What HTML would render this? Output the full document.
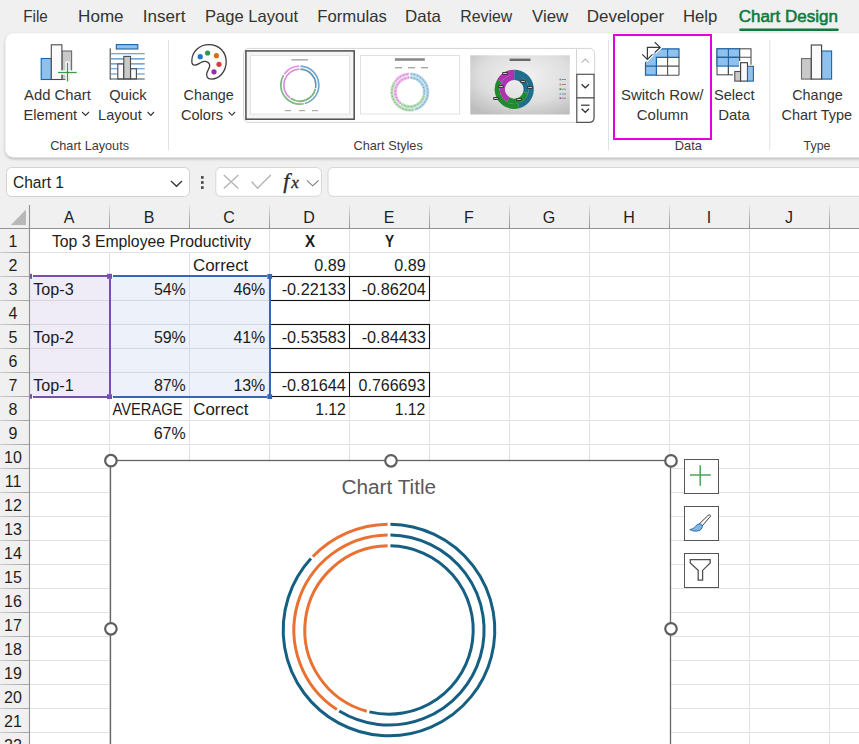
<!DOCTYPE html>
<html><head><meta charset="utf-8"><style>
html,body{margin:0;padding:0;width:859px;height:744px;overflow:hidden;background:#f0f0f0;}
svg{display:block;}
</style></head><body>
<svg width="859" height="744" viewBox="0 0 859 744">
<rect x="0" y="0" width="859" height="744" fill="#f0f0f0" stroke="none" stroke-width="1" rx="0" />
<text x="23.3" y="21.9" font-family="Liberation Sans" font-size="16.5" fill="#333333" font-weight="normal" textLength="24.5" lengthAdjust="spacingAndGlyphs" >File</text>
<text x="78.1" y="21.9" font-family="Liberation Sans" font-size="16.5" fill="#333333" font-weight="normal" textLength="45.5" lengthAdjust="spacingAndGlyphs" >Home</text>
<text x="142.8" y="21.9" font-family="Liberation Sans" font-size="16.5" fill="#333333" font-weight="normal" textLength="42.6" lengthAdjust="spacingAndGlyphs" >Insert</text>
<text x="204.9" y="21.9" font-family="Liberation Sans" font-size="16.5" fill="#333333" font-weight="normal" textLength="93.2" lengthAdjust="spacingAndGlyphs" >Page Layout</text>
<text x="317.3" y="21.9" font-family="Liberation Sans" font-size="16.5" fill="#333333" font-weight="normal" textLength="69.6" lengthAdjust="spacingAndGlyphs" >Formulas</text>
<text x="405.1" y="21.9" font-family="Liberation Sans" font-size="16.5" fill="#333333" font-weight="normal" textLength="35.7" lengthAdjust="spacingAndGlyphs" >Data</text>
<text x="460.3" y="21.9" font-family="Liberation Sans" font-size="16.5" fill="#333333" font-weight="normal" textLength="52.0" lengthAdjust="spacingAndGlyphs" >Review</text>
<text x="532.0" y="21.9" font-family="Liberation Sans" font-size="16.5" fill="#333333" font-weight="normal" textLength="36.2" lengthAdjust="spacingAndGlyphs" >View</text>
<text x="586.7" y="21.9" font-family="Liberation Sans" font-size="16.5" fill="#333333" font-weight="normal" textLength="77.5" lengthAdjust="spacingAndGlyphs" >Developer</text>
<text x="682.9" y="21.9" font-family="Liberation Sans" font-size="16.5" fill="#333333" font-weight="normal" textLength="34.5" lengthAdjust="spacingAndGlyphs" >Help</text>
<text x="738.7" y="21.9" font-family="Liberation Sans" font-size="16.5" fill="#0e7a3e" font-weight="normal" textLength="99.2" lengthAdjust="spacingAndGlyphs" stroke="#0e7a3e" stroke-width="0.55">Chart Design</text>
<line x1="740.5" y1="29.8" x2="837.5" y2="29.8" stroke="#0e7a3e" stroke-width="2.6" stroke-linecap="round"/>
<defs><filter id="sh" x="-5%" y="-20%" width="110%" height="140%"><feDropShadow dx="0" dy="1.5" stdDeviation="1.4" flood-color="#000" flood-opacity="0.28"/></filter></defs>
<rect x="5.5" y="33.3" width="900" height="124" fill="#ffffff" stroke="none" stroke-width="1" rx="8" filter="url(#sh)"/>
<rect x="41.2" y="58.5" width="10.2" height="21" fill="#8ec1ee" stroke="#1b64a6" stroke-width="1.1" rx="0" />
<rect x="62" y="51" width="9.6" height="28.5" fill="#c9c9c9" stroke="#6b6b6b" stroke-width="1.1" rx="0" />
<rect x="51.3" y="44.8" width="10.6" height="34.7" fill="#fafafa" stroke="#4a4a4a" stroke-width="1.1" rx="0" />
<line x1="57" y1="72.5" x2="78" y2="72.5" stroke="#ffffff" stroke-width="4.2" />
<line x1="67.5" y1="61.5" x2="67.5" y2="83" stroke="#ffffff" stroke-width="4.2" />
<rect x="69.5" y="74.5" width="9" height="9" fill="#ffffff" stroke="none" stroke-width="1" rx="0" />
<line x1="58" y1="72.5" x2="76.7" y2="72.5" stroke="#3a9c4a" stroke-width="1.3" />
<line x1="67.5" y1="62.8" x2="67.5" y2="81.5" stroke="#3a9c4a" stroke-width="1.3" />
<text x="24.1" y="99.6" font-family="Liberation Sans" font-size="14.8" fill="#333333" font-weight="normal" textLength="66.7" lengthAdjust="spacingAndGlyphs" >Add Chart</text>
<text x="23.6" y="119.5" font-family="Liberation Sans" font-size="14.8" fill="#333333" font-weight="normal" textLength="53.5" lengthAdjust="spacingAndGlyphs" >Element</text>
<path d="M82 112 L85.5 115.4 L89 112" fill="none" stroke="#333333" stroke-width="1.1" />
<rect x="116.3" y="44.6" width="21.5" height="4.4" fill="#8ec1ee" stroke="#1b64a6" stroke-width="1.1" rx="0" />
<line x1="111" y1="53.8" x2="144.7" y2="53.8" stroke="#4a8cc6" stroke-width="1.1" />
<line x1="111" y1="58.9" x2="144.7" y2="58.9" stroke="#4a8cc6" stroke-width="1.1" />
<line x1="111" y1="63.9" x2="144.7" y2="63.9" stroke="#4a8cc6" stroke-width="1.1" />
<line x1="111" y1="68.8" x2="144.7" y2="68.8" stroke="#4a8cc6" stroke-width="1.1" />
<line x1="111" y1="74.0" x2="144.7" y2="74.0" stroke="#4a8cc6" stroke-width="1.1" />
<rect x="117.8" y="64" width="5.8" height="15" fill="#fafafa" stroke="#4a4a4a" stroke-width="1.1" rx="0" />
<rect x="123.8" y="56.4" width="6.7" height="22.6" fill="#c9c9c9" stroke="#4a4a4a" stroke-width="1.1" rx="0" />
<rect x="130.6" y="68.8" width="5.8" height="10.2" fill="#fafafa" stroke="#4a4a4a" stroke-width="1.1" rx="0" />
<line x1="110.2" y1="48.3" x2="110.2" y2="79.4" stroke="#4a4a4a" stroke-width="1.1" />
<line x1="110" y1="79" x2="144.7" y2="79" stroke="#4a4a4a" stroke-width="1.1" />
<text x="109.2" y="99.6" font-family="Liberation Sans" font-size="14.8" fill="#333333" font-weight="normal" textLength="37.5" lengthAdjust="spacingAndGlyphs" >Quick</text>
<text x="98.1" y="119.5" font-family="Liberation Sans" font-size="14.8" fill="#333333" font-weight="normal" textLength="43.6" lengthAdjust="spacingAndGlyphs" >Layout</text>
<path d="M147.6 112 L150.8 115.4 L154 112" fill="none" stroke="#333333" stroke-width="1.1" />
<text x="50.2" y="149.8" font-family="Liberation Sans" font-size="12.8" fill="#3b3b3b" font-weight="normal" textLength="78.8" lengthAdjust="spacingAndGlyphs" >Chart Layouts</text>
<line x1="168.5" y1="40" x2="168.5" y2="150" stroke="#e1e1e1" stroke-width="1" />
<path d="M209 44.6 C219 44.6 226.2 52 226.2 61.6 C226.2 72 219 79.1 211.4 79.1 C207.5 79.1 205.8 76.5 206.9 73 C208 69.5 210.5 67 209.6 64.5 C208.6 61.5 205 60.5 201.5 62.2 C198.5 63.8 196.5 65.4 194.5 65.2 C192.5 65 191.8 63 191.8 61 C191.8 51.5 199.5 44.6 209 44.6 Z" fill="#fcfcfc" stroke="#3d3d3d" stroke-width="1.3" />
<circle cx="200.2" cy="56.7" r="2.6" fill="#1a78c9"/>
<circle cx="207.6" cy="53.0" r="2.6" fill="#2b9a4a"/>
<circle cx="216.4" cy="55.7" r="2.6" fill="#e06c10"/>
<circle cx="219.0" cy="64.3" r="2.6" fill="#d83b3b"/>
<circle cx="214.0" cy="71.8" r="2.6" fill="#9c2aa8"/>
<text x="183.6" y="99.9" font-family="Liberation Sans" font-size="14.8" fill="#333333" font-weight="normal" textLength="50.2" lengthAdjust="spacingAndGlyphs" >Change</text>
<text x="180.9" y="119.8" font-family="Liberation Sans" font-size="14.8" fill="#333333" font-weight="normal" textLength="42.2" lengthAdjust="spacingAndGlyphs" >Colors</text>
<path d="M228.7 112 L231.9 115.3 L235.1 112" fill="none" stroke="#333333" stroke-width="1.1" />
<rect x="243.6" y="48.4" width="351" height="74" fill="#ffffff" stroke="#d4d4d4" stroke-width="1" rx="5" />
<rect x="245.9" y="50.9" width="108.3" height="68.3" fill="#f4f4f4" stroke="#4d4d4d" stroke-width="1.5" rx="0" />
<rect x="250.5" y="55.5" width="99" height="58.5" fill="#ffffff" stroke="#e2e2e2" stroke-width="1" rx="0" />
<rect x="360.5" y="55.5" width="99" height="58.5" fill="#ffffff" stroke="#e2e2e2" stroke-width="1" rx="0" />
<defs><radialGradient id="g3" cx="55%" cy="35%" r="75%"><stop offset="0" stop-color="#f2f2f2"/><stop offset="0.6" stop-color="#dedede"/><stop offset="1" stop-color="#bdbdbd"/></radialGradient></defs>
<rect x="470.3" y="55.3" width="99.5" height="59.2" fill="url(#g3)" stroke="none" stroke-width="1" rx="0" />
<path d="M300.46 66.21 A19.0 19.0 0 0 1 304.72 103.55" fill="none" stroke="#4f8fb8" stroke-width="1.7" opacity="0.8"/>
<path d="M303.75 103.78 A19.0 19.0 0 0 1 283.69 75.13" fill="none" stroke="#62a865" stroke-width="1.7" opacity="0.8"/>
<path d="M284.24 74.30 A19.0 19.0 0 0 1 299.14 66.21" fill="none" stroke="#d77bd7" stroke-width="1.7" opacity="0.8"/>
<path d="M300.36 69.21 A16.0 16.0 0 0 1 315.56 87.98" fill="none" stroke="#3f7ea6" stroke-width="1.7" opacity="0.8"/>
<path d="M315.39 88.80 A16.0 16.0 0 0 1 290.62 98.31" fill="none" stroke="#5aa05d" stroke-width="1.7" opacity="0.8"/>
<path d="M289.95 97.81 A16.0 16.0 0 0 1 299.24 69.21" fill="none" stroke="#cf6fcf" stroke-width="1.7" opacity="0.8"/>
<rect x="291.4" y="59" width="16.5" height="1.6" fill="#b0b0b0" stroke="none" stroke-width="1" rx="0" />
<rect x="285" y="110" width="6" height="1.2" fill="#aaaaaa" stroke="none" stroke-width="1" rx="0" />
<rect x="299" y="110" width="6" height="1.2" fill="#aaaaaa" stroke="none" stroke-width="1" rx="0" />
<rect x="312" y="110" width="6" height="1.2" fill="#aaaaaa" stroke="none" stroke-width="1" rx="0" />
<path d="M410.43 74.11 A18.0 18.0 0 0 1 414.46 109.49" fill="none" stroke="#a9d3ea" stroke-width="3" />
<path d="M410.43 74.11 A18.0 18.0 0 0 1 414.46 109.49" fill="none" stroke="#6d6d6d" stroke-width="1" stroke-dasharray="1.2 2.2" opacity="0.6"/>
<path d="M413.54 109.71 A18.0 18.0 0 0 1 394.54 82.56" fill="none" stroke="#b5e0b5" stroke-width="3" />
<path d="M413.54 109.71 A18.0 18.0 0 0 1 394.54 82.56" fill="none" stroke="#6d6d6d" stroke-width="1" stroke-dasharray="1.2 2.2" opacity="0.6"/>
<path d="M395.06 81.78 A18.0 18.0 0 0 1 409.17 74.11" fill="none" stroke="#efb5ef" stroke-width="3" />
<path d="M395.06 81.78 A18.0 18.0 0 0 1 409.17 74.11" fill="none" stroke="#6d6d6d" stroke-width="1" stroke-dasharray="1.2 2.2" opacity="0.6"/>
<path d="M410.31 77.51 A14.6 14.6 0 0 1 424.18 94.64" fill="none" stroke="#a9d3ea" stroke-width="3" />
<path d="M410.31 77.51 A14.6 14.6 0 0 1 424.18 94.64" fill="none" stroke="#6d6d6d" stroke-width="1" stroke-dasharray="1.2 2.2" opacity="0.6"/>
<path d="M424.03 95.38 A14.6 14.6 0 0 1 401.43 104.06" fill="none" stroke="#b5e0b5" stroke-width="3" />
<path d="M424.03 95.38 A14.6 14.6 0 0 1 401.43 104.06" fill="none" stroke="#6d6d6d" stroke-width="1" stroke-dasharray="1.2 2.2" opacity="0.6"/>
<path d="M400.81 103.60 A14.6 14.6 0 0 1 409.29 77.51" fill="none" stroke="#efb5ef" stroke-width="3" />
<path d="M400.81 103.60 A14.6 14.6 0 0 1 409.29 77.51" fill="none" stroke="#6d6d6d" stroke-width="1" stroke-dasharray="1.2 2.2" opacity="0.6"/>
<rect x="394.9" y="58.2" width="29.9" height="2.6" fill="#8a8a8a" stroke="none" stroke-width="1" rx="0" />
<rect x="395" y="67" width="7" height="1.4" fill="#a8a8a8" stroke="none" stroke-width="1" rx="0" />
<rect x="408" y="67" width="7" height="1.4" fill="#a8a8a8" stroke="none" stroke-width="1" rx="0" />
<rect x="421" y="67" width="7" height="1.4" fill="#a8a8a8" stroke="none" stroke-width="1" rx="0" />
<path d="M514.20 72.30 A17.0 17.0 0 0 1 518.60 105.72" fill="none" stroke="#1f6e8c" stroke-width="5.2" />
<path d="M518.60 105.72 A17.0 17.0 0 0 1 499.48 80.80" fill="none" stroke="#1f8a30" stroke-width="5.2" />
<path d="M499.48 80.80 A17.0 17.0 0 0 1 514.20 72.30" fill="none" stroke="#b032b0" stroke-width="5.2" />
<path d="M514.20 77.40 A11.9 11.9 0 0 1 525.69 92.38" fill="none" stroke="#1f6e8c" stroke-width="5.2" />
<path d="M525.69 92.38 A11.9 11.9 0 0 1 508.25 99.61" fill="none" stroke="#1f8a30" stroke-width="5.2" />
<path d="M508.25 99.61 A11.9 11.9 0 0 1 514.20 77.40" fill="none" stroke="#b032b0" stroke-width="5.2" />
<rect x="509.6" y="58.6" width="20.9" height="2.4" fill="#6a6a6a" stroke="none" stroke-width="1" rx="0" />
<rect x="502.2" y="71.9" width="5.6" height="3.2" fill="#3a3a3a" stroke="none" stroke-width="1" rx="0.8" />
<rect x="503.2" y="73.0" width="3.6" height="1" fill="#cccccc" stroke="none" stroke-width="1" rx="0" />
<rect x="520.2" y="79.9" width="5.6" height="3.2" fill="#3a3a3a" stroke="none" stroke-width="1" rx="0.8" />
<rect x="521.2" y="81.0" width="3.6" height="1" fill="#cccccc" stroke="none" stroke-width="1" rx="0" />
<rect x="527.2" y="85.9" width="5.6" height="3.2" fill="#3a3a3a" stroke="none" stroke-width="1" rx="0.8" />
<rect x="528.2" y="87.0" width="3.6" height="1" fill="#cccccc" stroke="none" stroke-width="1" rx="0" />
<rect x="498.2" y="84.9" width="5.6" height="3.2" fill="#3a3a3a" stroke="none" stroke-width="1" rx="0.8" />
<rect x="499.2" y="86.0" width="3.6" height="1" fill="#cccccc" stroke="none" stroke-width="1" rx="0" />
<rect x="493.2" y="96.9" width="5.6" height="3.2" fill="#3a3a3a" stroke="none" stroke-width="1" rx="0.8" />
<rect x="494.2" y="98.0" width="3.6" height="1" fill="#cccccc" stroke="none" stroke-width="1" rx="0" />
<rect x="516.2" y="97.9" width="5.6" height="3.2" fill="#3a3a3a" stroke="none" stroke-width="1" rx="0.8" />
<rect x="517.2" y="99.0" width="3.6" height="1" fill="#cccccc" stroke="none" stroke-width="1" rx="0" />
<rect x="559.5" y="78.7" width="1.8" height="1.6" fill="#4f8fb8" stroke="none" stroke-width="1" rx="0" />
<rect x="562" y="79.0" width="4" height="1" fill="#8a8a8a" stroke="none" stroke-width="1" rx="0" />
<rect x="559.5" y="83.7" width="1.8" height="1.6" fill="#e08040" stroke="none" stroke-width="1" rx="0" />
<rect x="562" y="84.0" width="4" height="1" fill="#8a8a8a" stroke="none" stroke-width="1" rx="0" />
<rect x="559.5" y="88.4" width="1.8" height="1.6" fill="#2a8a3a" stroke="none" stroke-width="1" rx="0" />
<rect x="562" y="88.7" width="4" height="1" fill="#8a8a8a" stroke="none" stroke-width="1" rx="0" />
<rect x="559.5" y="93.2" width="1.8" height="1.6" fill="#5aaee0" stroke="none" stroke-width="1" rx="0" />
<rect x="562" y="93.5" width="4" height="1" fill="#8a8a8a" stroke="none" stroke-width="1" rx="0" />
<rect x="559.5" y="97.4" width="1.8" height="1.6" fill="#b040b0" stroke="none" stroke-width="1" rx="0" />
<rect x="562" y="97.7" width="4" height="1" fill="#8a8a8a" stroke="none" stroke-width="1" rx="0" />
<line x1="576.5" y1="48.4" x2="576.5" y2="122.4" stroke="#d4d4d4" stroke-width="1" />
<path d="M581.6 62.6 L585.3 59.1 L589 62.6" fill="none" stroke="#b8b8b8" stroke-width="1.1" />
<rect x="576.8" y="74.3" width="17.2" height="23.6" fill="#ffffff" stroke="#555" stroke-width="1.2" rx="0" />
<path d="M581.6 84.2 L585.3 87.8 L589 84.2" fill="none" stroke="#333" stroke-width="1.3" />
<path d="M576.8 98 L594 98 L594 117.5 Q594 122.4 589 122.4 L576.8 122.4 Z" fill="#ffffff" stroke="#555" stroke-width="1.2" />
<line x1="581" y1="105.2" x2="589.6" y2="105.2" stroke="#333" stroke-width="1.2" />
<path d="M581.6 108.8 L585.3 112.3 L589 108.8" fill="none" stroke="#333" stroke-width="1.3" />
<text x="353.5" y="149.8" font-family="Liberation Sans" font-size="12.8" fill="#3b3b3b" font-weight="normal" textLength="69.3" lengthAdjust="spacingAndGlyphs" >Chart Styles</text>
<line x1="608.5" y1="40" x2="608.5" y2="150" stroke="#e1e1e1" stroke-width="1" />
<defs><clipPath id="swc"><path d="M640 67.5 L663.5 44 L690 44 L690 80 L640 80 Z"/></clipPath></defs>
<g clip-path="url(#swc)">
<rect x="645.5" y="48.8" width="33.5" height="26.4" fill="#ffffff" stroke="none" stroke-width="1" rx="0" />
<rect x="645.5" y="48.8" width="33.5" height="8.5" fill="#8ec1ee" stroke="none" stroke-width="1" rx="0" />
<rect x="645.5" y="48.8" width="10.9" height="26.4" fill="#8ec1ee" stroke="none" stroke-width="1" rx="0" />
<line x1="667.6" y1="57.3" x2="667.6" y2="75.2" stroke="#505050" stroke-width="1.1" />
<line x1="656.4" y1="66.1" x2="679" y2="66.1" stroke="#505050" stroke-width="1.1" />
<line x1="679" y1="57.3" x2="679" y2="75.2" stroke="#505050" stroke-width="1.1" />
<line x1="656.4" y1="75.2" x2="679" y2="75.2" stroke="#505050" stroke-width="1.1" />
<path d="M645.5 48.8 L679 48.8 L679 57.3 L656.4 57.3 L656.4 75.2 L645.5 75.2 Z" fill="none" stroke="#1b64a6" stroke-width="1.2" />
<line x1="667.6" y1="48.8" x2="667.6" y2="57.3" stroke="#1b64a6" stroke-width="1.1" />
<line x1="645.5" y1="66.1" x2="656.4" y2="66.1" stroke="#1b64a6" stroke-width="1.1" />
</g>
<path d="M654.8 42.3 L660.2 47.4 L654.8 52.5 M642.3 54.3 L647.4 59.5 L652.5 54.3" fill="none" stroke="#ffffff" stroke-width="3.6" />
<path d="M647.4 58.8 L647.4 47.4 L659.9 47.4" fill="none" stroke="#3a3a3a" stroke-width="1.2" />
<path d="M654.8 42.3 L660.2 47.4 L654.8 52.5" fill="none" stroke="#3a3a3a" stroke-width="1.2" />
<path d="M642.3 54.3 L647.4 59.5 L652.5 54.3" fill="none" stroke="#3a3a3a" stroke-width="1.2" />
<text x="620.9" y="99.6" font-family="Liberation Sans" font-size="14.8" fill="#333333" font-weight="normal" textLength="82.5" lengthAdjust="spacingAndGlyphs" >Switch Row/</text>
<text x="636.8" y="119.5" font-family="Liberation Sans" font-size="14.8" fill="#333333" font-weight="normal" textLength="51.6" lengthAdjust="spacingAndGlyphs" >Column</text>
<rect x="614" y="35" width="97" height="104" fill="none" stroke="#e100e1" stroke-width="2" rx="0" />
<rect x="717" y="48.8" width="34" height="26" fill="#ffffff" stroke="#505050" stroke-width="1.1" rx="0" />
<rect x="717" y="48.8" width="22.6" height="17.3" fill="#8ec1ee" stroke="#1b64a6" stroke-width="1.1" rx="0" />
<line x1="728.4" y1="48.8" x2="728.4" y2="75" stroke="#1b64a6" stroke-width="1.1" />
<line x1="739.6" y1="48.8" x2="739.6" y2="75" stroke="#505050" stroke-width="1.1" />
<line x1="717" y1="57.3" x2="751" y2="57.3" stroke="#505050" stroke-width="1.1" />
<line x1="717" y1="57.3" x2="739.6" y2="57.3" stroke="#1b64a6" stroke-width="1.1" />
<line x1="728.4" y1="66.1" x2="728.4" y2="75" stroke="#505050" stroke-width="1.1" />
<rect x="733" y="70" width="9.5" height="14" fill="#ffffff" stroke="none" stroke-width="1" rx="0" />
<rect x="739" y="61" width="10" height="23" fill="#ffffff" stroke="none" stroke-width="1" rx="0" />
<rect x="746" y="64.7" width="9" height="20" fill="#ffffff" stroke="none" stroke-width="1" rx="0" />
<rect x="734.8" y="71.5" width="5.8" height="9.6" fill="#c9c9c9" stroke="#505050" stroke-width="1.1" rx="0" />
<rect x="740.6" y="62.7" width="6.9" height="18.4" fill="#fafafa" stroke="#3d3d3d" stroke-width="1.1" rx="0" />
<rect x="747.5" y="66.3" width="5.9" height="14.8" fill="#8ec1ee" stroke="#1b64a6" stroke-width="1.1" rx="0" />
<text x="714.0" y="99.6" font-family="Liberation Sans" font-size="14.8" fill="#333333" font-weight="normal" textLength="40.6" lengthAdjust="spacingAndGlyphs" >Select</text>
<text x="718.3" y="119.5" font-family="Liberation Sans" font-size="14.8" fill="#333333" font-weight="normal" textLength="31.5" lengthAdjust="spacingAndGlyphs" >Data</text>
<text x="674.8" y="149.8" font-family="Liberation Sans" font-size="12.8" fill="#3b3b3b" font-weight="normal" textLength="27.2" lengthAdjust="spacingAndGlyphs" >Data</text>
<line x1="769.8" y1="40" x2="769.8" y2="150" stroke="#e1e1e1" stroke-width="1" />
<rect x="801.5" y="58.6" width="9.8" height="20.5" fill="#c9c9c9" stroke="#6b6b6b" stroke-width="1.1" rx="0" />
<rect x="821.6" y="51" width="10" height="28.1" fill="#8ec1ee" stroke="#1b64a6" stroke-width="1.1" rx="0" />
<rect x="811.3" y="45" width="10.3" height="34.1" fill="#fafafa" stroke="#3d3d3d" stroke-width="1.1" rx="0" />
<text x="792.2" y="99.6" font-family="Liberation Sans" font-size="14.8" fill="#333333" font-weight="normal" textLength="50.5" lengthAdjust="spacingAndGlyphs" >Change</text>
<text x="781.6" y="119.5" font-family="Liberation Sans" font-size="14.8" fill="#333333" font-weight="normal" textLength="70.4" lengthAdjust="spacingAndGlyphs" >Chart Type</text>
<text x="803.6" y="149.8" font-family="Liberation Sans" font-size="12.8" fill="#3b3b3b" font-weight="normal" textLength="26.8" lengthAdjust="spacingAndGlyphs" >Type</text>
<rect x="6.5" y="167.5" width="183" height="29" fill="#ffffff" stroke="#d2d2d2" stroke-width="1" rx="5" />
<text x="13.0" y="187.5" font-family="Liberation Sans" font-size="16.3" fill="#222222" font-weight="normal" textLength="50.9" lengthAdjust="spacingAndGlyphs" >Chart 1</text>
<path d="M171 181 L176.5 186.3 L182 181" fill="none" stroke="#333" stroke-width="1.3" />
<rect x="201" y="176.10000000000002" width="2.6" height="2.6" fill="#444" stroke="none" stroke-width="1" rx="0" />
<rect x="201" y="181.20000000000002" width="2.6" height="2.6" fill="#444" stroke="none" stroke-width="1" rx="0" />
<rect x="201" y="186.3" width="2.6" height="2.6" fill="#444" stroke="none" stroke-width="1" rx="0" />
<rect x="215.8" y="167.5" width="105.6" height="28.8" fill="#ffffff" stroke="#d6d6d6" stroke-width="1" rx="5" />
<path d="M223.8 175 L238.4 188.6 M238.4 175 L223.8 188.6" fill="none" stroke="#b3b3b3" stroke-width="1.3" />
<path d="M251.5 181.5 L257.5 188.2 L270.8 175" fill="none" stroke="#b3b3b3" stroke-width="1.3" />
<text x="283.3" y="188.3" font-family="Liberation Serif" font-size="22" font-style="italic" fill="#2a2a2a" stroke="#2a2a2a" stroke-width="0.35">f</text>
<text x="291.3" y="188.3" font-family="Liberation Serif" font-size="17" font-style="italic" fill="#2a2a2a" stroke="#2a2a2a" stroke-width="0.35">x</text>
<path d="M306.9 180.4 L312.7 185.8 L318.6 180.4" fill="none" stroke="#7a7a7a" stroke-width="1.1" />
<rect x="328" y="167.5" width="600" height="28.8" fill="#ffffff" stroke="#d6d6d6" stroke-width="1" rx="5" />
<rect x="0" y="205" width="859" height="23" fill="#f0f0f0" stroke="none" stroke-width="1" rx="0" />
<rect x="0" y="229" width="29" height="515" fill="#f0f0f0" stroke="none" stroke-width="1" rx="0" />
<rect x="29.5" y="228.5" width="859" height="744" fill="#ffffff" stroke="none" stroke-width="1" rx="0" />
<path d="M26 209.5 L26 225 L10.8 225 Z" fill="#b8b8b8" stroke="none" stroke-width="1" />
<rect x="29.5" y="276" width="80.5" height="121" fill="#efecf7" stroke="none" stroke-width="1" rx="0" />
<rect x="110" y="276" width="160" height="121" fill="#edf1fa" stroke="none" stroke-width="1" rx="0" />
<line x1="109.5" y1="252.5" x2="109.5" y2="744" stroke="#e1e1e1" stroke-width="1" />
<line x1="189.5" y1="252.5" x2="189.5" y2="744" stroke="#e1e1e1" stroke-width="1" />
<line x1="269.5" y1="228.5" x2="269.5" y2="744" stroke="#e1e1e1" stroke-width="1" />
<line x1="349.5" y1="228.5" x2="349.5" y2="744" stroke="#e1e1e1" stroke-width="1" />
<line x1="429.5" y1="228.5" x2="429.5" y2="744" stroke="#e1e1e1" stroke-width="1" />
<line x1="509.5" y1="228.5" x2="509.5" y2="744" stroke="#e1e1e1" stroke-width="1" />
<line x1="589.5" y1="228.5" x2="589.5" y2="744" stroke="#e1e1e1" stroke-width="1" />
<line x1="669.5" y1="228.5" x2="669.5" y2="744" stroke="#e1e1e1" stroke-width="1" />
<line x1="749.5" y1="228.5" x2="749.5" y2="744" stroke="#e1e1e1" stroke-width="1" />
<line x1="829.5" y1="228.5" x2="829.5" y2="744" stroke="#e1e1e1" stroke-width="1" />
<line x1="29.5" y1="252.5" x2="859" y2="252.5" stroke="#e1e1e1" stroke-width="1" />
<line x1="29.5" y1="276.5" x2="859" y2="276.5" stroke="#e1e1e1" stroke-width="1" />
<line x1="29.5" y1="300.5" x2="859" y2="300.5" stroke="#e1e1e1" stroke-width="1" />
<line x1="29.5" y1="324.5" x2="859" y2="324.5" stroke="#e1e1e1" stroke-width="1" />
<line x1="29.5" y1="348.5" x2="859" y2="348.5" stroke="#e1e1e1" stroke-width="1" />
<line x1="29.5" y1="372.5" x2="859" y2="372.5" stroke="#e1e1e1" stroke-width="1" />
<line x1="29.5" y1="396.5" x2="859" y2="396.5" stroke="#e1e1e1" stroke-width="1" />
<line x1="29.5" y1="420.5" x2="859" y2="420.5" stroke="#e1e1e1" stroke-width="1" />
<line x1="29.5" y1="444.5" x2="859" y2="444.5" stroke="#e1e1e1" stroke-width="1" />
<line x1="29.5" y1="468.5" x2="859" y2="468.5" stroke="#e1e1e1" stroke-width="1" />
<line x1="29.5" y1="492.5" x2="859" y2="492.5" stroke="#e1e1e1" stroke-width="1" />
<line x1="29.5" y1="516.5" x2="859" y2="516.5" stroke="#e1e1e1" stroke-width="1" />
<line x1="29.5" y1="540.5" x2="859" y2="540.5" stroke="#e1e1e1" stroke-width="1" />
<line x1="29.5" y1="564.5" x2="859" y2="564.5" stroke="#e1e1e1" stroke-width="1" />
<line x1="29.5" y1="588.5" x2="859" y2="588.5" stroke="#e1e1e1" stroke-width="1" />
<line x1="29.5" y1="612.5" x2="859" y2="612.5" stroke="#e1e1e1" stroke-width="1" />
<line x1="29.5" y1="636.5" x2="859" y2="636.5" stroke="#e1e1e1" stroke-width="1" />
<line x1="29.5" y1="660.5" x2="859" y2="660.5" stroke="#e1e1e1" stroke-width="1" />
<line x1="29.5" y1="684.5" x2="859" y2="684.5" stroke="#e1e1e1" stroke-width="1" />
<line x1="29.5" y1="708.5" x2="859" y2="708.5" stroke="#e1e1e1" stroke-width="1" />
<line x1="29.5" y1="732.5" x2="859" y2="732.5" stroke="#e1e1e1" stroke-width="1" />
<line x1="30" y1="300.5" x2="270" y2="300.5" stroke="#d6d6de" stroke-width="1" />
<line x1="30" y1="324.5" x2="270" y2="324.5" stroke="#d6d6de" stroke-width="1" />
<line x1="30" y1="348.5" x2="270" y2="348.5" stroke="#d6d6de" stroke-width="1" />
<line x1="30" y1="372.5" x2="270" y2="372.5" stroke="#d6d6de" stroke-width="1" />
<line x1="189.5" y1="276" x2="189.5" y2="397" stroke="#d6d9e2" stroke-width="1" />
<defs><linearGradient id="vsep" x1="0" y1="0" x2="0" y2="1"><stop offset="0" stop-color="#e4e4e4"/><stop offset="1" stop-color="#8e8e8e"/></linearGradient><linearGradient id="hsep" x1="0" y1="0" x2="1" y2="0"><stop offset="0" stop-color="#cfcfcf"/><stop offset="1" stop-color="#a2a2a2"/></linearGradient></defs>
<rect x="109" y="205" width="1" height="23" fill="url(#vsep)" stroke="none" stroke-width="1" rx="0" />
<rect x="189" y="205" width="1" height="23" fill="url(#vsep)" stroke="none" stroke-width="1" rx="0" />
<rect x="269" y="205" width="1" height="23" fill="url(#vsep)" stroke="none" stroke-width="1" rx="0" />
<rect x="349" y="205" width="1" height="23" fill="url(#vsep)" stroke="none" stroke-width="1" rx="0" />
<rect x="429" y="205" width="1" height="23" fill="url(#vsep)" stroke="none" stroke-width="1" rx="0" />
<rect x="509" y="205" width="1" height="23" fill="url(#vsep)" stroke="none" stroke-width="1" rx="0" />
<rect x="589" y="205" width="1" height="23" fill="url(#vsep)" stroke="none" stroke-width="1" rx="0" />
<rect x="669" y="205" width="1" height="23" fill="url(#vsep)" stroke="none" stroke-width="1" rx="0" />
<rect x="749" y="205" width="1" height="23" fill="url(#vsep)" stroke="none" stroke-width="1" rx="0" />
<rect x="829" y="205" width="1" height="23" fill="url(#vsep)" stroke="none" stroke-width="1" rx="0" />
<rect x="0" y="252" width="29" height="1" fill="url(#hsep)" stroke="none" stroke-width="1" rx="0" />
<rect x="0" y="276" width="29" height="1" fill="url(#hsep)" stroke="none" stroke-width="1" rx="0" />
<rect x="0" y="300" width="29" height="1" fill="url(#hsep)" stroke="none" stroke-width="1" rx="0" />
<rect x="0" y="324" width="29" height="1" fill="url(#hsep)" stroke="none" stroke-width="1" rx="0" />
<rect x="0" y="348" width="29" height="1" fill="url(#hsep)" stroke="none" stroke-width="1" rx="0" />
<rect x="0" y="372" width="29" height="1" fill="url(#hsep)" stroke="none" stroke-width="1" rx="0" />
<rect x="0" y="396" width="29" height="1" fill="url(#hsep)" stroke="none" stroke-width="1" rx="0" />
<rect x="0" y="420" width="29" height="1" fill="url(#hsep)" stroke="none" stroke-width="1" rx="0" />
<rect x="0" y="444" width="29" height="1" fill="url(#hsep)" stroke="none" stroke-width="1" rx="0" />
<rect x="0" y="468" width="29" height="1" fill="url(#hsep)" stroke="none" stroke-width="1" rx="0" />
<rect x="0" y="492" width="29" height="1" fill="url(#hsep)" stroke="none" stroke-width="1" rx="0" />
<rect x="0" y="516" width="29" height="1" fill="url(#hsep)" stroke="none" stroke-width="1" rx="0" />
<rect x="0" y="540" width="29" height="1" fill="url(#hsep)" stroke="none" stroke-width="1" rx="0" />
<rect x="0" y="564" width="29" height="1" fill="url(#hsep)" stroke="none" stroke-width="1" rx="0" />
<rect x="0" y="588" width="29" height="1" fill="url(#hsep)" stroke="none" stroke-width="1" rx="0" />
<rect x="0" y="612" width="29" height="1" fill="url(#hsep)" stroke="none" stroke-width="1" rx="0" />
<rect x="0" y="636" width="29" height="1" fill="url(#hsep)" stroke="none" stroke-width="1" rx="0" />
<rect x="0" y="660" width="29" height="1" fill="url(#hsep)" stroke="none" stroke-width="1" rx="0" />
<rect x="0" y="684" width="29" height="1" fill="url(#hsep)" stroke="none" stroke-width="1" rx="0" />
<rect x="0" y="708" width="29" height="1" fill="url(#hsep)" stroke="none" stroke-width="1" rx="0" />
<rect x="0" y="732" width="29" height="1" fill="url(#hsep)" stroke="none" stroke-width="1" rx="0" />
<rect x="0" y="756" width="29" height="1" fill="url(#hsep)" stroke="none" stroke-width="1" rx="0" />
<line x1="0" y1="228.5" x2="859" y2="228.5" stroke="#929292" stroke-width="1.1" />
<line x1="29.5" y1="205" x2="29.5" y2="744" stroke="#929292" stroke-width="1.1" />
<text x="69" y="222.6" font-family="Liberation Sans" font-size="16" fill="#1f1f1f" text-anchor="middle">A</text>
<text x="149" y="222.6" font-family="Liberation Sans" font-size="16" fill="#1f1f1f" text-anchor="middle">B</text>
<text x="229" y="222.6" font-family="Liberation Sans" font-size="16" fill="#1f1f1f" text-anchor="middle">C</text>
<text x="309" y="222.6" font-family="Liberation Sans" font-size="16" fill="#1f1f1f" text-anchor="middle">D</text>
<text x="389" y="222.6" font-family="Liberation Sans" font-size="16" fill="#1f1f1f" text-anchor="middle">E</text>
<text x="469" y="222.6" font-family="Liberation Sans" font-size="16" fill="#1f1f1f" text-anchor="middle">F</text>
<text x="549" y="222.6" font-family="Liberation Sans" font-size="16" fill="#1f1f1f" text-anchor="middle">G</text>
<text x="629" y="222.6" font-family="Liberation Sans" font-size="16" fill="#1f1f1f" text-anchor="middle">H</text>
<text x="709" y="222.6" font-family="Liberation Sans" font-size="16" fill="#1f1f1f" text-anchor="middle">I</text>
<text x="789" y="222.6" font-family="Liberation Sans" font-size="16" fill="#1f1f1f" text-anchor="middle">J</text>
<text x="13" y="246.5" font-family="Liberation Sans" font-size="16" fill="#1f1f1f" text-anchor="middle">1</text>
<text x="13" y="270.5" font-family="Liberation Sans" font-size="16" fill="#1f1f1f" text-anchor="middle">2</text>
<text x="13" y="294.5" font-family="Liberation Sans" font-size="16" fill="#1f1f1f" text-anchor="middle">3</text>
<text x="13" y="318.5" font-family="Liberation Sans" font-size="16" fill="#1f1f1f" text-anchor="middle">4</text>
<text x="13" y="342.5" font-family="Liberation Sans" font-size="16" fill="#1f1f1f" text-anchor="middle">5</text>
<text x="13" y="366.5" font-family="Liberation Sans" font-size="16" fill="#1f1f1f" text-anchor="middle">6</text>
<text x="13" y="390.5" font-family="Liberation Sans" font-size="16" fill="#1f1f1f" text-anchor="middle">7</text>
<text x="13" y="414.5" font-family="Liberation Sans" font-size="16" fill="#1f1f1f" text-anchor="middle">8</text>
<text x="13" y="438.5" font-family="Liberation Sans" font-size="16" fill="#1f1f1f" text-anchor="middle">9</text>
<text x="13" y="462.5" font-family="Liberation Sans" font-size="16" fill="#1f1f1f" text-anchor="middle">10</text>
<text x="13" y="486.5" font-family="Liberation Sans" font-size="16" fill="#1f1f1f" text-anchor="middle">11</text>
<text x="13" y="510.5" font-family="Liberation Sans" font-size="16" fill="#1f1f1f" text-anchor="middle">12</text>
<text x="13" y="534.5" font-family="Liberation Sans" font-size="16" fill="#1f1f1f" text-anchor="middle">13</text>
<text x="13" y="558.5" font-family="Liberation Sans" font-size="16" fill="#1f1f1f" text-anchor="middle">14</text>
<text x="13" y="582.5" font-family="Liberation Sans" font-size="16" fill="#1f1f1f" text-anchor="middle">15</text>
<text x="13" y="606.5" font-family="Liberation Sans" font-size="16" fill="#1f1f1f" text-anchor="middle">16</text>
<text x="13" y="630.5" font-family="Liberation Sans" font-size="16" fill="#1f1f1f" text-anchor="middle">17</text>
<text x="13" y="654.5" font-family="Liberation Sans" font-size="16" fill="#1f1f1f" text-anchor="middle">18</text>
<text x="13" y="678.5" font-family="Liberation Sans" font-size="16" fill="#1f1f1f" text-anchor="middle">19</text>
<text x="13" y="702.5" font-family="Liberation Sans" font-size="16" fill="#1f1f1f" text-anchor="middle">20</text>
<text x="13" y="726.5" font-family="Liberation Sans" font-size="16" fill="#1f1f1f" text-anchor="middle">21</text>
<text x="13" y="750.5" font-family="Liberation Sans" font-size="16" fill="#1f1f1f" text-anchor="middle">22</text>
<rect x="269.5" y="276.5" width="160" height="24" fill="none" stroke="#111111" stroke-width="1.1" rx="0" />
<line x1="349.5" y1="276.5" x2="349.5" y2="300.5" stroke="#111111" stroke-width="1.1" />
<rect x="269.5" y="324.5" width="160" height="24" fill="none" stroke="#111111" stroke-width="1.1" rx="0" />
<line x1="349.5" y1="324.5" x2="349.5" y2="348.5" stroke="#111111" stroke-width="1.1" />
<rect x="269.5" y="372.5" width="160" height="24" fill="none" stroke="#111111" stroke-width="1.1" rx="0" />
<line x1="349.5" y1="372.5" x2="349.5" y2="396.5" stroke="#111111" stroke-width="1.1" />
<text x="51.9" y="246.5" font-family="Liberation Sans" font-size="16" fill="#1b1b1b" font-weight="normal" textLength="199.2" lengthAdjust="spacingAndGlyphs" >Top 3 Employee Productivity</text>
<text x="305.0" y="246.5" font-family="Liberation Sans" font-size="16" fill="#1b1b1b" font-weight="bold" textLength="10.1" lengthAdjust="spacingAndGlyphs" >X</text>
<text x="385.1" y="246.5" font-family="Liberation Sans" font-size="16" fill="#1b1b1b" font-weight="bold" textLength="9.1" lengthAdjust="spacingAndGlyphs" >Y</text>
<text x="193.0" y="270.5" font-family="Liberation Sans" font-size="16" fill="#1b1b1b" font-weight="normal" textLength="55.3" lengthAdjust="spacingAndGlyphs" >Correct</text>
<text x="314.3" y="270.5" font-family="Liberation Sans" font-size="16" fill="#1b1b1b" font-weight="normal" textLength="31.5" lengthAdjust="spacingAndGlyphs" >0.89</text>
<text x="394.3" y="270.5" font-family="Liberation Sans" font-size="16" fill="#1b1b1b" font-weight="normal" textLength="31.5" lengthAdjust="spacingAndGlyphs" >0.89</text>
<text x="33.3" y="294.5" font-family="Liberation Sans" font-size="16" fill="#1b1b1b" font-weight="normal" textLength="40.4" lengthAdjust="spacingAndGlyphs" >Top-3</text>
<text x="153.9" y="294.5" font-family="Liberation Sans" font-size="16" fill="#1b1b1b" font-weight="normal" textLength="31.9" lengthAdjust="spacingAndGlyphs" >54%</text>
<text x="233.4" y="294.5" font-family="Liberation Sans" font-size="16" fill="#1b1b1b" font-weight="normal" textLength="31.9" lengthAdjust="spacingAndGlyphs" >46%</text>
<text x="281.7" y="294.5" font-family="Liberation Sans" font-size="16" fill="#1b1b1b" font-weight="normal" textLength="64.1" lengthAdjust="spacingAndGlyphs" >-0.22133</text>
<text x="361.7" y="294.5" font-family="Liberation Sans" font-size="16" fill="#1b1b1b" font-weight="normal" textLength="64.1" lengthAdjust="spacingAndGlyphs" >-0.86204</text>
<text x="33.3" y="342.5" font-family="Liberation Sans" font-size="16" fill="#1b1b1b" font-weight="normal" textLength="40.4" lengthAdjust="spacingAndGlyphs" >Top-2</text>
<text x="153.9" y="342.5" font-family="Liberation Sans" font-size="16" fill="#1b1b1b" font-weight="normal" textLength="31.9" lengthAdjust="spacingAndGlyphs" >59%</text>
<text x="233.4" y="342.5" font-family="Liberation Sans" font-size="16" fill="#1b1b1b" font-weight="normal" textLength="31.9" lengthAdjust="spacingAndGlyphs" >41%</text>
<text x="281.7" y="342.5" font-family="Liberation Sans" font-size="16" fill="#1b1b1b" font-weight="normal" textLength="64.1" lengthAdjust="spacingAndGlyphs" >-0.53583</text>
<text x="361.7" y="342.5" font-family="Liberation Sans" font-size="16" fill="#1b1b1b" font-weight="normal" textLength="64.1" lengthAdjust="spacingAndGlyphs" >-0.84433</text>
<text x="33.3" y="390.5" font-family="Liberation Sans" font-size="16" fill="#1b1b1b" font-weight="normal" textLength="40.4" lengthAdjust="spacingAndGlyphs" >Top-1</text>
<text x="153.9" y="390.5" font-family="Liberation Sans" font-size="16" fill="#1b1b1b" font-weight="normal" textLength="31.9" lengthAdjust="spacingAndGlyphs" >87%</text>
<text x="233.4" y="390.5" font-family="Liberation Sans" font-size="16" fill="#1b1b1b" font-weight="normal" textLength="31.9" lengthAdjust="spacingAndGlyphs" >13%</text>
<text x="281.7" y="390.5" font-family="Liberation Sans" font-size="16" fill="#1b1b1b" font-weight="normal" textLength="64.1" lengthAdjust="spacingAndGlyphs" >-0.81644</text>
<text x="358.6" y="390.5" font-family="Liberation Sans" font-size="16" fill="#1b1b1b" font-weight="normal" textLength="66.7" lengthAdjust="spacingAndGlyphs" >0.766693</text>
<text x="112.5" y="414.5" font-family="Liberation Sans" font-size="16" fill="#1b1b1b" font-weight="normal" textLength="70.1" lengthAdjust="spacingAndGlyphs" >AVERAGE</text>
<text x="193.3" y="414.5" font-family="Liberation Sans" font-size="16" fill="#1b1b1b" font-weight="normal" textLength="55.1" lengthAdjust="spacingAndGlyphs" >Correct</text>
<text x="315.2" y="414.5" font-family="Liberation Sans" font-size="16" fill="#1b1b1b" font-weight="normal" textLength="30.6" lengthAdjust="spacingAndGlyphs" >1.12</text>
<text x="394.7" y="414.5" font-family="Liberation Sans" font-size="16" fill="#1b1b1b" font-weight="normal" textLength="30.6" lengthAdjust="spacingAndGlyphs" >1.12</text>
<text x="153.7" y="438.5" font-family="Liberation Sans" font-size="16" fill="#1b1b1b" font-weight="normal" textLength="31.9" lengthAdjust="spacingAndGlyphs" >67%</text>
<line x1="33" y1="276" x2="107" y2="276" stroke="#7750ad" stroke-width="2" />
<line x1="33" y1="397" x2="107" y2="397" stroke="#7750ad" stroke-width="2" />
<line x1="110" y1="279" x2="110" y2="394" stroke="#7750ad" stroke-width="2" />
<rect x="30" y="273.8" width="2" height="5" fill="#7750ad" stroke="none" stroke-width="1" rx="0" />
<rect x="30" y="394.2" width="2" height="4.5" fill="#7750ad" stroke="none" stroke-width="1" rx="0" />
<rect x="107" y="273.8" width="5" height="5" fill="#7750ad" stroke="none" stroke-width="1" rx="0" />
<rect x="107" y="394.2" width="5" height="4.8" fill="#7750ad" stroke="none" stroke-width="1" rx="0" />
<line x1="113" y1="276" x2="267" y2="276" stroke="#3865b6" stroke-width="2" />
<line x1="113" y1="397" x2="267" y2="397" stroke="#3865b6" stroke-width="2" />
<line x1="270" y1="279" x2="270" y2="394" stroke="#3865b6" stroke-width="2" />
<rect x="267.3" y="274" width="4.8" height="4.9" fill="#3865b6" stroke="none" stroke-width="1" rx="0" />
<rect x="267.3" y="394.2" width="4.8" height="4.8" fill="#3865b6" stroke="none" stroke-width="1" rx="0" />
<rect x="110.5" y="460.5" width="560" height="340" fill="#ffffff" stroke="#666666" stroke-width="1.3" rx="0" />
<text x="388.8" y="493.5" font-family="Liberation Sans" font-size="19.5" fill="#595959" text-anchor="middle" textLength="94.6" lengthAdjust="spacingAndGlyphs">Chart Title</text>
<path d="M390.40 524.21 A105.8 105.8 0 1 1 310.92 558.60" fill="none" stroke="#156082" stroke-width="3" />
<path d="M312.84 556.56 A105.8 105.8 0 0 1 387.60 524.21" fill="none" stroke="#e97132" stroke-width="3" />
<path d="M390.40 534.91 A95.1 95.1 0 1 1 339.23 711.04" fill="none" stroke="#156082" stroke-width="3" />
<path d="M336.87 709.54 A95.1 95.1 0 0 1 387.60 534.91" fill="none" stroke="#e97132" stroke-width="3" />
<path d="M390.40 545.81 A84.2 84.2 0 1 1 369.42 711.89" fill="none" stroke="#156082" stroke-width="3" />
<path d="M366.71 711.20 A84.2 84.2 0 0 1 387.60 545.81" fill="none" stroke="#e97132" stroke-width="3" />
<circle cx="110.9" cy="460.7" r="5.75" fill="#ffffff" stroke="#5e5e5e" stroke-width="2.2"/>
<circle cx="391" cy="460.8" r="5.75" fill="#ffffff" stroke="#5e5e5e" stroke-width="2.2"/>
<circle cx="671" cy="460.9" r="5.75" fill="#ffffff" stroke="#5e5e5e" stroke-width="2.2"/>
<circle cx="110.9" cy="628.8" r="5.75" fill="#ffffff" stroke="#5e5e5e" stroke-width="2.2"/>
<circle cx="671" cy="628.8" r="5.75" fill="#ffffff" stroke="#5e5e5e" stroke-width="2.2"/>
<rect x="684.5" y="459.5" width="34" height="34" fill="#ffffff" stroke="#555555" stroke-width="1" rx="0" />
<rect x="684.5" y="506.5" width="34" height="34" fill="#ffffff" stroke="#555555" stroke-width="1" rx="0" />
<rect x="684.5" y="553.5" width="34" height="34" fill="#ffffff" stroke="#555555" stroke-width="1" rx="0" />
<line x1="690" y1="475" x2="710.8" y2="475" stroke="#3aa04c" stroke-width="1.4" />
<line x1="700.2" y1="465.3" x2="700.2" y2="485.7" stroke="#3aa04c" stroke-width="1.4" />
<path d="M699.4 523.8 L707.8 515.7 Q710.4 513.6 710.4 516.4 L702.1 526 Z" fill="#ffffff" stroke="#3a3a3a" stroke-width="1" />
<path d="M689.8 529.6 Q693.6 529.2 695.4 526.4 Q697.6 523.2 700.6 523.9 Q702.8 525 702.2 527.6 Q701 531 696.5 531.2 Q692.5 531.3 689.8 529.6 Z" fill="#7fb6e6" stroke="#1f64a8" stroke-width="0.9" />
<path d="M690.3 559.6 L710.2 559.6 L710.2 563 L702.6 570.4 L702.6 580.1 L698.2 580.1 L698.2 570.4 L690.3 563 Z" fill="#ffffff" stroke="#505050" stroke-width="1.3" />
</svg></body></html>
